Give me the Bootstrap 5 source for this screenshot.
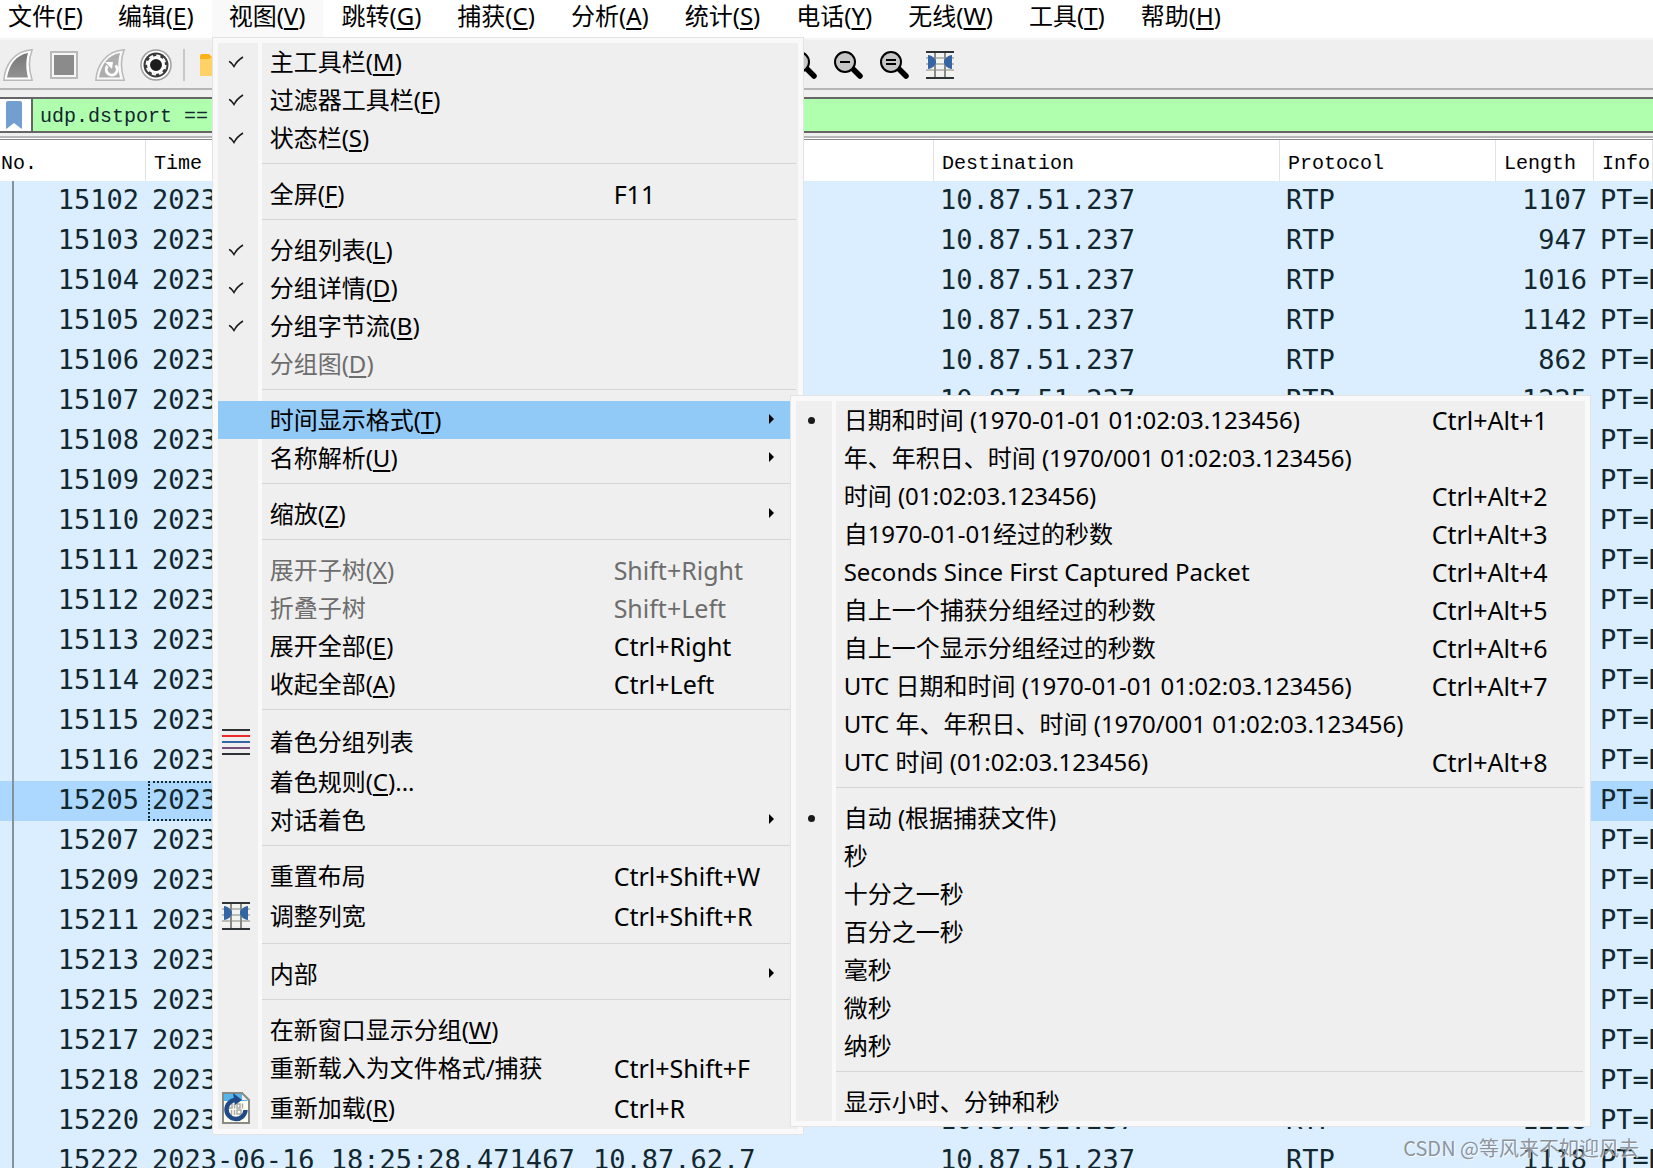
<!DOCTYPE html>
<html lang="zh-CN">
<head>
<meta charset="utf-8">
<meta name="viewport" content="width=device-width, initial-scale=1">
<title>Wireshark</title>
<link href="https://cdn.jsdelivr.net/npm/bootstrap@5.3.0/dist/css/bootstrap.min.css" rel="stylesheet">
<style>
  :root { --face: #efefef; --edge: #f9f9f9; --hot: #91c9f7; }
  body { font-family: "Noto Sans", "Noto Sans CJK SC", sans-serif; font-size: 24px; line-height: 32px; color: #000; background: #fff; }
  u { text-decoration-thickness: 2px; text-underline-offset: 3px; text-decoration-skip-ink: none; }

  /* menu bar */
  .menubar { height: 38px; margin-left: -9px; }
  .menubar > li > .nav-link { height: 37px; padding: 0 18px 0 17px; color: #000; white-space: nowrap; border-radius: 0; }
  .menubar > li.position-relative ~ li > .nav-link { padding-left: 18px; }
  .menubar > li > .nav-link.active { background: var(--edge); }

  /* tool bar */
  .toolstrip { height: 50px; padding: 2px 0 0 3px; gap: 16px; background: var(--face); border-top: 2px solid #f4f4f4; }
  .tool { width: 30px; height: 32px; padding: 0; border: 0; background: none; display: flex; align-items: center; justify-content: center; }
  .tool-rule { width: 2px; height: 32px; margin: 0 -2px 0 -4px; background: #c8c8c8; }
  .zoomers { gap: 16px; margin-left: 542px; }

  /* display filter */
  .filterbar { background: var(--face); border-top: 2px solid #b6b6b6; border-bottom: 2px solid #b6b6b6; padding: 7px 0 3px; }
  .filterbox { height: 36px; border: solid #666; border-width: 2px 0; }
  .bookmark { width: 33px; padding: 0 3px 0 0; border: 0; border-right: 2px solid #666; background: #fff; }
  .filterbox input { background: #afffaf; border: 0; padding: 3px 7px 0; font: 20px/28px "Liberation Mono", monospace; color: #12272e; min-width: 0; outline: 0; }

  /* packet list */
  .packets { margin-top: 1px; border-top: 1px solid #85858c; background: #daeeff; }
  .packets::before { content: ""; position: absolute; left: 12px; top: 41px; bottom: 0; width: 2px; background: #84929b; z-index: 1; }
  .packets table { width: 100%; table-layout: fixed; border-collapse: separate; border-spacing: 0; }
  .packets th { height: 41px; padding: 6px 8px 0; background: #fff; border-right: 1px solid #e2e2e2; font: 20px/32px "Liberation Mono", monospace; color: #000; white-space: nowrap; }
  .packets th:first-child { padding-left: 1px; }
  .packets td { height: 40px; padding: 0 7px 2px 6px; font: 27px/38px "DejaVu Sans Mono", monospace; color: #12272e; white-space: nowrap; overflow: hidden; }
  .packets tr.picked td { background: #acd8ff; }
  .packets tr.picked td:nth-child(2) { position: relative; }
  .packets tr.picked td:nth-child(2)::after { content: ""; position: absolute; inset: 0 0 0 2px; border: 2px dotted #12272e; }
  .w-no { width: 146px; } .w-time { width: 441px; } .w-addr { width: 347px; } .w-dest { width: 346px; } .w-proto { width: 216px; } .w-len { width: 98px; }

  /* pull-down menus */
  .pull { --gutter: 40px; --text: 52px; --label: 344px; display: block; position: absolute; top: 37px; left: 0; width: 592px; margin: 0; padding: 5px; list-style: none; border: 1px solid #e3e3e3; z-index: 10;
    background: linear-gradient(to right, var(--face) var(--gutter), var(--edge) var(--gutter), var(--edge) calc(var(--gutter) + 4px), var(--face) calc(var(--gutter) + 4px)) content-box, var(--edge); }
  .pull-sub { --gutter: 36px; --text: 48px; --label: 588px; top: -6px; left: 572px; width: 801px; z-index: 11; }
  .entry { display: grid; grid-template-columns: var(--text) var(--label) 1fr; align-items: center; width: 100%; height: 38px; padding: 0; border: 0; background: none; color: #000; text-align: left; white-space: nowrap; position: relative; }
  .entry.tall { height: 42px; }
  .entry.hot { background: var(--hot); }
  .entry:disabled { color: #6d6d6d; }
  .entry span:nth-child(3) { font-size: 25px; }
  .entry .glyph { width: var(--gutter); display: flex; justify-content: center; }
  .entry .glyph.tick { padding-right: 4px; }
  .entry .glyph.dot::before { content: ""; width: 7px; height: 7px; margin-right: 5px; border-radius: 50%; background: #1a1a1a; }
  .entry.more::after { content: ""; position: absolute; left: 551px; top: 13px; border: solid transparent; border-width: 5px 0 5px 5px; border-left-color: #000; }
  .pull hr { height: 1px; margin: 6px 2px 11px calc(var(--gutter) + 4px); border: 0; background: #d5d5d5; opacity: 1; }

  .watermark { position: absolute; right: 14px; bottom: 5px; z-index: 20; font: 20px/30px "Noto Sans CJK SC", sans-serif; color: rgba(125, 130, 138, .85); text-shadow: 1px 1px 0 rgba(255, 255, 255, .7); white-space: nowrap; }
</style>
<script src="https://cdn.jsdelivr.net/npm/bootstrap@5.3.0/dist/js/bootstrap.bundle.min.js"></script>
</head>
<body>
<svg class="d-none">
  <symbol id="tick" viewBox="0 0 16 12"><path d="M1 5.5c2 .5 3 2 5 5C8 6.500 11 3.500 15 1" fill="none" stroke="#1a1a1a" stroke-width="1.500"/></symbol>
  <symbol id="lens" viewBox="0 0 30 30"><path d="M19 18l8 8" stroke="#000" stroke-width="5.500" stroke-linecap="round"/><circle cx="12" cy="12" r="10" fill="#c6c6c6" stroke="#000" stroke-width="2"/></symbol>
  <symbol id="resize" viewBox="0 0 28 28">
    <path d="M0 4h28M0 10h28M0 16h28M0 22h28" stroke="#f3f3f1" stroke-width="4"/><path d="M0 7h28M0 13h28M0 19h28" stroke="#babdb6" stroke-width="2"/>
    <path d="M9 1v26M19 1v26" stroke="#888a85" stroke-width="2"/>
    <path d="M0 1h28M0 27h28" stroke="#2e3436" stroke-width="2"/>
    <path d="M2 4c4 0 8 4 8 7s-4 7-8 7zM26 4c-4 0-8 4-8 7s4 7 8 7z" fill="#3465a4"/>
  </symbol>
</svg>
<div class="vh-100 d-flex flex-column overflow-hidden position-relative">
  <nav aria-label="菜单栏">
    <ul class="menubar nav flex-nowrap">
      <li><a class="nav-link" href="#">文件(<u>F</u>)</a></li>
      <li><a class="nav-link" href="#">编辑(<u>E</u>)</a></li>
      <li class="position-relative"><a class="nav-link active" href="#" aria-expanded="true">视图(<u>V</u>)</a>
        <ul class="pull">
          <li><button class="entry"><span class="glyph tick"><svg width="16" height="12"><use href="#tick"/></svg></span><span>主工具栏(<u>M</u>)</span></button></li>
          <li><button class="entry"><span class="glyph tick"><svg width="16" height="12"><use href="#tick"/></svg></span><span>过滤器工具栏(<u>F</u>)</span></button></li>
          <li><button class="entry"><span class="glyph tick"><svg width="16" height="12"><use href="#tick"/></svg></span><span>状态栏(<u>S</u>)</span></button></li>
          <li><hr></li>
          <li><button class="entry"><span class="glyph"></span><span>全屏(<u>F</u>)</span><span>F11</span></button></li>
          <li><hr></li>
          <li><button class="entry"><span class="glyph tick"><svg width="16" height="12"><use href="#tick"/></svg></span><span>分组列表(<u>L</u>)</span></button></li>
          <li><button class="entry"><span class="glyph tick"><svg width="16" height="12"><use href="#tick"/></svg></span><span>分组详情(<u>D</u>)</span></button></li>
          <li><button class="entry"><span class="glyph tick"><svg width="16" height="12"><use href="#tick"/></svg></span><span>分组字节流(<u>B</u>)</span></button></li>
          <li><button class="entry" disabled><span class="glyph"></span><span>分组图(<u>D</u>)</span></button></li>
          <li><hr></li>
          <li class="position-relative"><button class="entry more hot" aria-expanded="true"><span class="glyph"></span><span>时间显示格式(<u>T</u>)</span></button>
            <ul class="pull pull-sub">
              <li><button class="entry"><span class="glyph dot"></span><span>日期和时间 (1970-01-01 01:02:03.123456)</span><span>Ctrl+Alt+1</span></button></li>
              <li><button class="entry"><span class="glyph"></span><span>年、年积日、时间 (1970/001 01:02:03.123456)</span></button></li>
              <li><button class="entry"><span class="glyph"></span><span>时间 (01:02:03.123456)</span><span>Ctrl+Alt+2</span></button></li>
              <li><button class="entry"><span class="glyph"></span><span>自1970-01-01经过的秒数</span><span>Ctrl+Alt+3</span></button></li>
              <li><button class="entry"><span class="glyph"></span><span>Seconds Since First Captured Packet</span><span>Ctrl+Alt+4</span></button></li>
              <li><button class="entry"><span class="glyph"></span><span>自上一个捕获分组经过的秒数</span><span>Ctrl+Alt+5</span></button></li>
              <li><button class="entry"><span class="glyph"></span><span>自上一个显示分组经过的秒数</span><span>Ctrl+Alt+6</span></button></li>
              <li><button class="entry"><span class="glyph"></span><span>UTC 日期和时间 (1970-01-01 01:02:03.123456)</span><span>Ctrl+Alt+7</span></button></li>
              <li><button class="entry"><span class="glyph"></span><span>UTC 年、年积日、时间 (1970/001 01:02:03.123456)</span></button></li>
              <li><button class="entry"><span class="glyph"></span><span>UTC 时间 (01:02:03.123456)</span><span>Ctrl+Alt+8</span></button></li>
              <li><hr></li>
              <li><button class="entry"><span class="glyph dot"></span><span>自动 (根据捕获文件)</span></button></li>
              <li><button class="entry"><span class="glyph"></span><span>秒</span></button></li>
              <li><button class="entry"><span class="glyph"></span><span>十分之一秒</span></button></li>
              <li><button class="entry"><span class="glyph"></span><span>百分之一秒</span></button></li>
              <li><button class="entry"><span class="glyph"></span><span>毫秒</span></button></li>
              <li><button class="entry"><span class="glyph"></span><span>微秒</span></button></li>
              <li><button class="entry"><span class="glyph"></span><span>纳秒</span></button></li>
              <li><hr></li>
              <li><button class="entry"><span class="glyph"></span><span>显示小时、分钟和秒</span></button></li>
            </ul>
          </li>
          <li><button class="entry more"><span class="glyph"></span><span>名称解析(<u>U</u>)</span></button></li>
          <li><hr></li>
          <li><button class="entry more"><span class="glyph"></span><span>缩放(<u>Z</u>)</span></button></li>
          <li><hr></li>
          <li><button class="entry" disabled><span class="glyph"></span><span>展开子树(<u>X</u>)</span><span>Shift+Right</span></button></li>
          <li><button class="entry" disabled><span class="glyph"></span><span>折叠子树</span><span>Shift+Left</span></button></li>
          <li><button class="entry"><span class="glyph"></span><span>展开全部(<u>E</u>)</span><span>Ctrl+Right</span></button></li>
          <li><button class="entry"><span class="glyph"></span><span>收起全部(<u>A</u>)</span><span>Ctrl+Left</span></button></li>
          <li><hr></li>
          <li><button class="entry tall"><span class="glyph tick"><svg width="28" height="26" viewBox="0 0 28 26" stroke-width="2"><path d="M0 1h28M0 25h28" stroke="#2e3436"/><path d="M0 7h28" stroke="#ef2929"/><path d="M0 13h28" stroke="#3465a4"/><path d="M0 19h28" stroke="#75507b"/></svg></span><span>着色分组列表</span></button></li>
          <li><button class="entry"><span class="glyph"></span><span>着色规则(<u>C</u>)...</span></button></li>
          <li><button class="entry more"><span class="glyph"></span><span>对话着色</span></button></li>
          <li><hr></li>
          <li><button class="entry"><span class="glyph"></span><span>重置布局</span><span>Ctrl+Shift+W</span></button></li>
          <li><button class="entry tall"><span class="glyph tick"><svg width="28" height="28"><use href="#resize"/></svg></span><span>调整列宽</span><span>Ctrl+Shift+R</span></button></li>
          <li><hr></li>
          <li><button class="entry more"><span class="glyph"></span><span>内部</span></button></li>
          <li><hr></li>
          <li><button class="entry"><span class="glyph"></span><span>在新窗口显示分组(<u>W</u>)</span></button></li>
          <li><button class="entry"><span class="glyph"></span><span>重新载入为文件格式/捕获</span><span>Ctrl+Shift+F</span></button></li>
          <li><button class="entry tall"><span class="glyph tick"><svg width="28" height="32" viewBox="0 0 28 32">
            <path d="M1 1h19l7 7v23H1z" fill="#fffff0"/><path d="M2 2h18l6 7H2z" fill="#55b5ea"/><path d="M20 1v7h7z" fill="#eee"/>
            <g fill="none" stroke="#aaa" stroke-width="1.500"><rect x="7" y="12" width="3" height="4"/><path d="M12.500 11.500v5M20.500 11.500v5M9.500 18v5M12.500 18v5"/><rect x="15" y="12" width="3" height="4"/><rect x="15" y="18" width="4" height="4"/></g>
            <path d="M1 1h19l7 7v23H1z" fill="none" stroke="#888a85" stroke-width="2"/>
            <path d="M14 8A9.500 9.500 0 1 0 23.500 18" fill="none" stroke="#204a87" stroke-width="4.500"/><path d="M11 1l9 7-7 5z" fill="#204a87"/></svg></span><span>重新加载(<u>R</u>)</span><span>Ctrl+R</span></button></li>
        </ul>
      </li>
      <li><a class="nav-link" href="#">跳转(<u>G</u>)</a></li>
      <li><a class="nav-link" href="#">捕获(<u>C</u>)</a></li>
      <li><a class="nav-link" href="#">分析(<u>A</u>)</a></li>
      <li><a class="nav-link" href="#">统计(<u>S</u>)</a></li>
      <li><a class="nav-link" href="#">电话(<u>Y</u>)</a></li>
      <li><a class="nav-link" href="#">无线(<u>W</u>)</a></li>
      <li><a class="nav-link" href="#">工具(<u>T</u>)</a></li>
      <li><a class="nav-link" href="#">帮助(<u>H</u>)</a></li>
    </ul>
  </nav>

  <div class="toolstrip d-flex align-items-center flex-shrink-0" role="toolbar" aria-label="主工具栏">
    <button class="tool" aria-label="开始捕获"><svg width="30" height="32" viewBox="0 0 30 32"><defs><linearGradient id="fin" x1="0" y1="0" x2="0" y2="1"><stop offset="0" stop-color="#777"/><stop offset="1" stop-color="#929292"/></linearGradient></defs><path d="M.8 31.200C2 16 11 2 29.200.800 25 11 25.500 20 29.200 31.200z" fill="#fff" stroke="#b9b9b9" stroke-width="1.500"/><path d="M4 28.500C6 16 13 6 25 4c-2.500 9-2 16 0 24.500z" fill="url(#fin)"/></svg></button>
    <button class="tool" aria-label="停止捕获"><svg width="28" height="28" viewBox="0 0 28 28"><path d="M1 1h26v26H1z" fill="#f6f6f6" stroke="#b9b9b9" stroke-width="2"/><path d="M4 4h20v20H4z" fill="#8b8b8b"/></svg></button>
    <button class="tool" aria-label="重新开始捕获"><svg width="30" height="32" viewBox="0 0 30 32"><path d="M.8 31.200C2 16 11 2 29.200.800 25 11 25.500 20 29.200 31.200z" fill="#f8f8f8" stroke="#b9b9b9" stroke-width="1.500"/><path d="M4 28.500C6 16 13 6 25 4c-2.500 9-2 16 0 24.500z" fill="#adadad"/><path d="M20.500 16.500a5.500 5.500 0 1 1-8 .5" fill="none" stroke="#fff" stroke-width="3"/><path d="M10 13h8l-1 7z" fill="#fff"/></svg></button>
    <button class="tool" aria-label="捕获选项"><svg width="32" height="32" viewBox="-16 -16 32 32" class="flex-shrink-0"><circle r="15" fill="#fff" stroke="#a0a0a0" stroke-width="1.500"/><circle r="12.500" fill="#3a3a3a"/><circle r="7.500" fill="none" stroke="#fff" stroke-width="3"/><circle r="9.500" fill="none" stroke="#fff" stroke-width="2" stroke-dasharray="4.200 3.261"/><circle r="5.500" fill="#1d1d1d"/></svg></button>
    <span class="tool-rule"></span>
    <button class="tool" aria-label="打开"><svg width="30" height="24" viewBox="0 0 30 24"><path d="M1 3a2 2 0 0 1 2-2h7l3 3h14v18H1z" fill="#fbb117"/><path d="M1 6h9l3-2h16v19H1z" fill="#ffd267"/></svg></button>
    <div class="zoomers d-flex">
      <button class="tool" aria-label="放大"><svg width="30" height="30"><use href="#lens"/><path d="M7 12h10M12 7v10" stroke="#000" stroke-width="2"/></svg></button>
      <button class="tool" aria-label="缩小"><svg width="30" height="30"><use href="#lens"/><path d="M7 12h10" stroke="#000" stroke-width="2"/></svg></button>
      <button class="tool" aria-label="正常大小"><svg width="30" height="30"><use href="#lens"/><path d="M7 10h10M7 14h10" stroke="#000" stroke-width="2"/></svg></button>
      <button class="tool" aria-label="调整列宽"><svg width="28" height="28"><use href="#resize"/></svg></button>
    </div>
  </div>

  <div class="filterbar flex-shrink-0">
    <div class="filterbox d-flex">
      <button class="bookmark d-flex align-items-center justify-content-center flex-shrink-0" aria-label="书签"><svg width="16" height="28" viewBox="0 0 16 28"><path d="M0 2a2 2 0 0 1 2-2h12a2 2 0 0 1 2 2v25q0 1-1 .5L8 22l-7 5.500q-1 .5-1-.5z" fill="#729fcf"/></svg></button>
      <input class="flex-grow-1" type="text" aria-label="显示过滤器" value="udp.dstport ==">
    </div>
  </div>

  <main class="packets position-relative flex-grow-1 overflow-hidden">
    <table>
      <colgroup><col class="w-no"><col class="w-time"><col class="w-addr"><col class="w-dest"><col class="w-proto"><col class="w-len"><col></colgroup>
      <thead><tr><th>No.</th><th>Time</th><th></th><th>Destination</th><th>Protocol</th><th>Length</th><th>Info</th></tr></thead>
      <tbody id="rows"></tbody>
    </table>
  </main>
  <div class="watermark">CSDN @等风来不如迎风去</div>
</div>
<script>
  const numbers = [15102, 15103, 15104, 15105, 15106, 15107, 15108, 15109, 15110, 15111, 15112, 15113, 15114, 15115, 15116,
                   15205, 15207, 15209, 15211, 15213, 15215, 15217, 15218, 15220, 15222];
  const lengths = { 15102: 1107, 15103: 947, 15104: 1016, 15105: 1142, 15106: 862, 15107: 1225, 15220: 1228, 15222: 1118 };
  const full = { 15222: ["2023-06-16 18:25:28.471467", "10.87.62.7"] };
  document.getElementById("rows").innerHTML = numbers.map(n => {
    const [time, source] = full[n] || ["2023", ""];
    const [dest, proto] = lengths[n] ? ["10.87.51.237", "RTP"] : ["", ""];
    return `<tr class="${n === 15205 ? "picked" : ""}"><td class="text-end">${n}</td><td>${time}</td><td>${source}</td><td>${dest}</td><td>${proto}</td><td class="text-end">${lengths[n] || ""}</td><td>PT=D</td></tr>`;
  }).join("");
</script>
</body>
</html>
